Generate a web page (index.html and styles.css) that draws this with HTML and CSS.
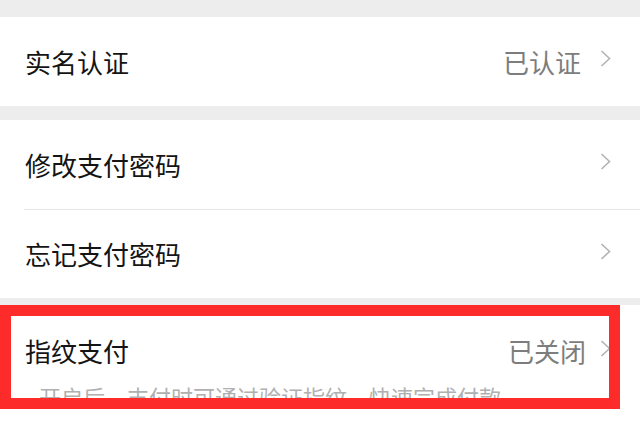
FILE: index.html
```html
<!DOCTYPE html>
<html lang="zh-CN">
<head>
<meta charset="utf-8">
<title>支付设置</title>
<link rel="stylesheet" href="styles.css">
</head>
<body>
<div class="page">
  <section class="group group-first">
    <div class="row">
      <span class="label">实名认证</span>
      <span class="trail"><span class="value">已认证</span><svg class="chev" width="11" height="17" viewBox="0 0 11 17"><polyline points="1.5,1 9.5,8.5 1.5,16" /></svg></span>
    </div>
  </section>
  <section class="group group-second">
    <div class="row row-a">
      <span class="label">修改支付密码</span>
      <span class="trail"><svg class="chev" width="11" height="17" viewBox="0 0 11 17"><polyline points="1.5,1 9.5,8.5 1.5,16" /></svg></span>
    </div>
    <div class="divider"></div>
    <div class="row row-b">
      <span class="label">忘记支付密码</span>
      <span class="trail"><svg class="chev" width="11" height="17" viewBox="0 0 11 17"><polyline points="1.5,1 9.5,8.5 1.5,16" /></svg></span>
    </div>
  </section>
  <section class="group group-fp">
    <div class="fp-head">
      <span class="label">指纹支付</span>
      <span class="trail trail-fp"><span class="value">已关闭</span><svg class="chev" width="11" height="17" viewBox="0 0 11 17"><polyline points="1.5,1 9.5,8.5 1.5,16" /></svg></span>
    </div>
    <p class="note">开启后，支付时可通过验证指纹，快速完成付款</p>
    <div class="highlight"></div>
  </section>
</div>
</body>
</html>
```
FILE: styles.css
```css
html, body {
  margin: 0;
  padding: 0;
  height: 100%;
  overflow: hidden;
}
body {
  background: #ededed;
  font-family: "Noto Sans CJK SC", "Noto Sans", sans-serif;
}
.page {
  display: flex;
  flex-direction: column;
  min-height: 100vh;
}
.group {
  background: #ffffff;
}
.group-first {
  margin-top: 17px;
}
.group-second {
  margin-top: 14px;
}
.group-fp {
  margin-top: 7px;
  flex: 1;
  position: relative;
}
.row {
  height: 89px;
  display: flex;
  align-items: center;
  justify-content: space-between;
  padding: 0 29px 0 25px;
}
.row-b {
  height: 88px;
}
.label {
  font-size: 26px;
  line-height: 36px;
  color: #141414;
}
.trail {
  display: flex;
  align-items: center;
  gap: 19px;
}
.value {
  font-size: 26px;
  line-height: 36px;
  color: #7d7d7d;
}
.chev {
  display: block;
  margin-top: -6px;
}
.chev polyline {
  fill: none;
  stroke: #b3b3b3;
  stroke-width: 1.6;
}
.divider {
  height: 1px;
  background: #e6e6e6;
  margin-left: 24px;
}
.fp-head {
  display: flex;
  align-items: center;
  justify-content: space-between;
  padding: 28px 29px 0 25px;
}
.trail-fp {
  gap: 13px;
}
.trail-fp .value {
  margin-right: 1px;
}
.note {
  margin: 12px 0 0 39px;
  font-size: 22px;
  line-height: 30px;
  color: #b0b0b0;
}
.highlight {
  position: absolute;
  left: 0;
  top: 0;
  width: 620px;
  height: 104px;
  box-sizing: border-box;
  border: 11px solid #fd2b2a;
}
```
